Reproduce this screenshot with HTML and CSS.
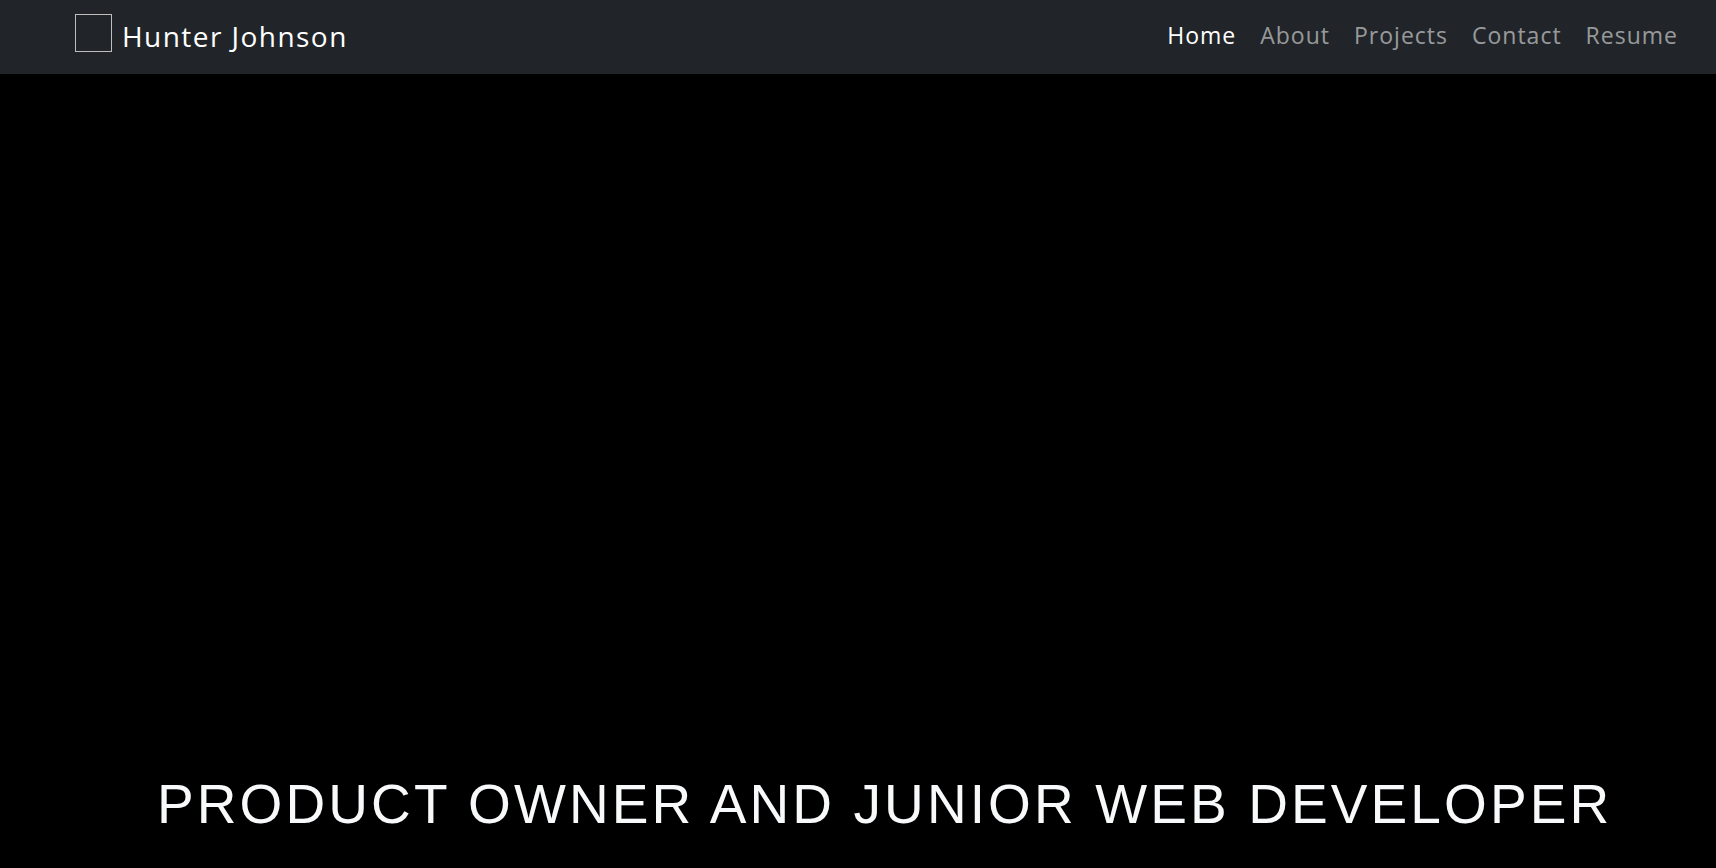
FILE: index.html
```html
<!DOCTYPE html>
<html lang="en">
<head>
<meta charset="utf-8">
<title>Hunter Johnson</title>
<link rel="stylesheet" href="styles.css">
</head>
<body>
<nav class="navbar">
  <a class="brand" href="#">
    <span class="brand-logo"></span>
    <span class="brand-name">Hunter Johnson</span>
  </a>
  <ul class="nav-links">
    <li><a class="nav-link active" href="#">Home</a></li>
    <li><a class="nav-link" href="#">About</a></li>
    <li><a class="nav-link" href="#">Projects</a></li>
    <li><a class="nav-link" href="#">Contact</a></li>
    <li><a class="nav-link" href="#">Resume</a></li>
  </ul>
</nav>
<main class="hero">
  <h1 class="hero-title">PRODUCT OWNER AND JUNIOR WEB DEVELOPER</h1>
</main>
</body>
</html>
```

FILE: styles.css
```css
* { box-sizing: border-box; }
html, body { margin: 0; padding: 0; }
body {
  background: #000;
  height: 868px;
  overflow: hidden;
  display: flex;
  flex-direction: column;
  font-family: "Open Sans", "Noto Sans", sans-serif;
}
.navbar {
  height: 74px;
  flex: 0 0 74px;
  background: #212529;
  display: flex;
  align-items: center;
  justify-content: space-between;
  padding: 0 38px 0 75px;
}
.brand {
  display: flex;
  align-items: center;
  text-decoration: none;
  color: #fff;
}
.brand-logo {
  width: 37px;
  height: 38px;
  border: 1px solid #bdbdbd;
  margin-top: -9px;
  margin-right: 10px;
}
.brand-name {
  font-size: 28px;
  letter-spacing: 1.45px;
  line-height: 1;
  margin-top: -3px;
}
.nav-links {
  list-style: none;
  margin: 0;
  padding: 0;
  display: flex;
  gap: 24px;
  margin-top: -2px;
}
.nav-link {
  font-size: 23px;
  letter-spacing: 1px;
  text-decoration: none;
  color: rgba(255, 255, 255, 0.55);
  line-height: 1;
}
.nav-link.active { color: #fff; }
.hero {
  flex: 1;
  display: flex;
  align-items: flex-end;
  padding: 0 0 36px 157px;
}
.hero-title {
  margin: 0;
  font-family: "Liberation Sans", Arial, sans-serif;
  font-weight: 400;
  font-size: 55px;
  line-height: 1;
  letter-spacing: 3.1px;
  color: #f8f9fa;
}
```
